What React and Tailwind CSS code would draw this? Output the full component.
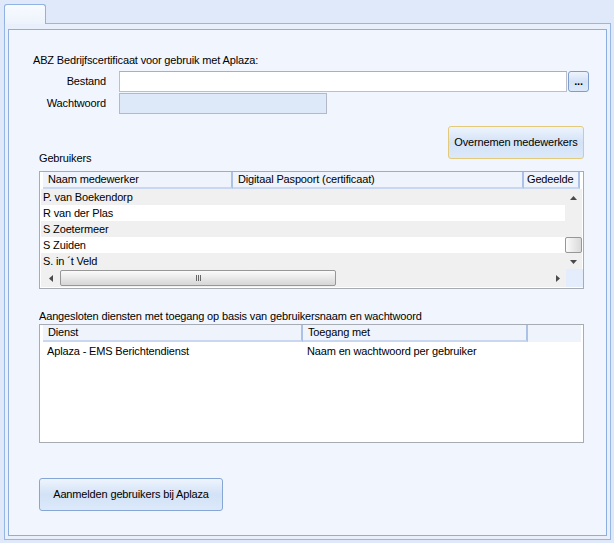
const users = ["P. van Boekendorp", "R van der Plas", "S Zoetermeer", "S Zuiden", "S. in \u00b4t Veld"];

const btn =
  "flex items-center justify-center rounded-[3px] bg-gradient-to-b from-[#eef4fd] via-[#d3e2f6] to-[#dce9fa] text-black";

function HeaderCell({ w, pad = "pl-[5px]", children }) {
  return (
    <div
      className={`${w} ${pad} h-full shrink-0 leading-[15px] border-b-2 border-r-2 border-b-[#c9d8f0] border-r-[#abc2e6] bg-[#eef3fc] whitespace-nowrap overflow-hidden`}
    >
      {children}
    </div>
  );
}

function Arrow({ dir }) {
  const pts = {
    up: "0,4 3.5,0 7,4",
    down: "0,0 3.5,4 7,0",
    left: "4,0 0,3.5 4,7",
    right: "0,0 4,3.5 0,7",
  };
  const vertical = dir === "up" || dir === "down";
  return (
    <svg width={vertical ? 7 : 4} height={vertical ? 4 : 7} viewBox={vertical ? "0 0 7 4" : "0 0 4 7"} className="block">
      <polygon points={pts[dir]} fill="#4a4a4a" />
    </svg>
  );
}

export default function App() {
  return (
    <div className="w-[614px] h-[543px] overflow-hidden bg-[#dfe9f9] text-[11px] tracking-[-0.15px] text-black font-['Liberation_Sans',sans-serif]">
      <div className="h-[23px] pl-[4px] pt-[4px] flex relative z-10">
        <div className="w-[42px] h-[20px] border border-b-0 border-[#8fb1e3] rounded-t-[3px] bg-gradient-to-b from-[#f8fbff] to-[#edf3fc]"></div>
      </div>
      <div className="ml-[4px] w-[607px] h-[517px] border border-[#96b6e4] bg-[#e9f0fc] pt-[5px] px-[3px] pb-[3px]">
        <div className="h-full border border-[#8cafe0] bg-[#f1f6fe] flex flex-col pl-[30px] pr-[22px]">
          <div className="mt-[24px] -ml-[6px] leading-[13px]">ABZ Bedrijfscertificaat voor gebruik met Aplaza:</div>

          <div className="mt-[4px] flex items-center h-[21px] -ml-[30px] -mr-[22px]">
            <div className="w-[97px] shrink-0 text-right">Bestand</div>
            <div className="ml-[13px] shrink-0 w-[448px] h-[21px] bg-white border border-[#b9c0cc] border-t-[#a9b0bb]"></div>
            <button className={`${btn} shrink-0 ml-[1px] w-[21px] h-[21px] border border-[#7f9ccb] font-bold leading-none items-end pb-[4px]`}>
              ...
            </button>
          </div>

          <div className="mt-[1px] flex items-center h-[21px] -ml-[30px]">
            <div className="w-[97px] shrink-0 text-right">Wachtwoord</div>
            <div className="ml-[13px] shrink-0 w-[208px] h-[21px] bg-[#dde8f8] border border-[#b3bac6]"></div>
          </div>

          <div className="mt-[12px] h-[39px] flex justify-between">
            <div className="self-end leading-[13px]">Gebruikers</div>
            <button className={`${btn} self-start w-[136px] h-[33px] border border-[#e3ca7a]`}>
              Overnemen medewerkers
            </button>
          </div>

          <div className="mt-[6px] w-[545px] h-[118px] border border-[#a7abb2] bg-white flex flex-col">
            <div className="h-[17px] flex pl-[3px]">
              <HeaderCell w="w-[190px]">Naam medewerker</HeaderCell>
              <HeaderCell w="w-[291px]">Digitaal Paspoort (certificaat)</HeaderCell>
              <HeaderCell w="w-[56px]" pad="pl-[3px]">Gedeelde</HeaderCell>
            </div>
            <div className="flex h-[80px]">
              <div className="w-[525px] pl-[1px] flex flex-col">
                {users.map((u, i) => (
                  <div
                    key={u}
                    className={`h-[16px] leading-[16px] pl-[2px] whitespace-nowrap ${i % 2 === 0 ? "bg-[#f0f0f0]" : "bg-white"}`}
                  >
                    {u}
                  </div>
                ))}
              </div>
              <div className="w-[17px] bg-[#f0f0f0] flex flex-col">
                <div className="h-[17px] flex items-center justify-center">
                  <Arrow dir="up" />
                </div>
                <div className="flex-1 flex flex-col justify-end">
                  <div className="h-[16px] rounded-[2px] border border-[#979797] bg-gradient-to-r from-[#fbfbfb] to-[#d9d9d9] mb-[1px]"></div>
                </div>
                <div className="h-[15px] flex items-center justify-center">
                  <Arrow dir="down" />
                </div>
              </div>
            </div>
            <div className="flex h-[18px] pl-[1px]">
              <div className="w-[525px] bg-[#f0f0f0] flex items-center">
                <div className="w-[19px] flex items-center justify-center">
                  <Arrow dir="left" />
                </div>
                <div className="w-[276px] h-[16px] rounded-[2px] border border-[#979797] bg-gradient-to-b from-[#fbfbfb] to-[#d6d6d6] flex items-center justify-center">
                  <div className="flex gap-[1px]">
                    <div className="w-[1px] h-[6px] bg-[#666]"></div>
                    <div className="w-[1px] h-[6px] bg-[#666]"></div>
                    <div className="w-[1px] h-[6px] bg-[#666]"></div>
                  </div>
                </div>
                <div className="flex-1 flex items-center justify-end pr-[6px]">
                  <Arrow dir="right" />
                </div>
              </div>
              <div className="w-[17px] bg-[#e3edfb]"></div>
            </div>
          </div>

          <div className="mt-[21px] leading-[13px]">
            Aangesloten diensten met toegang op basis van gebruikersnaam en wachtwoord
          </div>

          <div className="mt-[1px] w-[545px] h-[119px] border border-[#a7abb2] bg-white flex flex-col">
            <div className="h-[17px] flex pl-[3px] pr-[2px]">
              <HeaderCell w="w-[260px]">Dienst</HeaderCell>
              <HeaderCell w="w-[225px]">Toegang met</HeaderCell>
              <div className="flex-1 bg-[#eef3fc]"></div>
            </div>
            <div className="flex h-[17px] leading-[17px] mt-[1px] pl-[3px]">
              <div className="w-[260px] pl-[4px] whitespace-nowrap">Aplaza - EMS Berichtendienst</div>
              <div className="pl-[4px] whitespace-nowrap">Naam en wachtwoord per gebruiker</div>
            </div>
          </div>

          <button className={`${btn} mt-[35px] w-[184px] h-[33px] border border-[#86a6d6]`}>
            Aanmelden gebruikers bij Aplaza
          </button>
        </div>
      </div>
    </div>
  );
}
